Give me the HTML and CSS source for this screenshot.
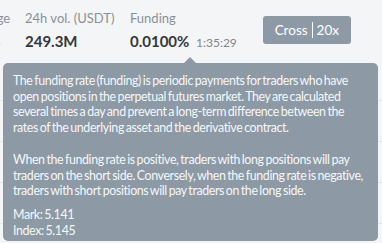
FILE: index.html
```html
<!DOCTYPE html>
<html>
<head>
<meta charset="utf-8">
<link rel="stylesheet" href="styles.css">
</head>
<body>
<div class="page">
  <div class="header">
    <div class="stat stat-change">
      <div class="label">Change</div>
      <div class="value red">-1.27%</div>
    </div>
    <div class="stat stat-vol">
      <div class="label">24h vol. (USDT)</div>
      <div class="value">249.3M</div>
    </div>
    <div class="stat stat-funding">
      <div class="label">Funding</div>
      <div class="value">0.0100% <span class="timer">1:35:29</span></div>
    </div>
    <div class="btn-wrap">
      <button class="btn">Cross<span class="sep"></span>20x</button>
    </div>
  </div>
  <div class="rows">
    <div class="row"></div>
    <div class="row"></div>
    <div class="row"></div>
    <div class="row"></div>
  </div>
  <div class="tooltip">
    <div class="arrow"></div>
    <p class="p1">The funding rate (funding) is periodic payments for traders who have open positions in the perpetual futures market. They are calculated several times a day and prevent a long-term difference between the rates of the underlying asset and the derivative contract.</p>
    <p class="p2">When the funding rate is positive, traders with long positions will pay traders on the short side. Conversely, when the funding rate is negative, traders with short positions will pay traders on the long side.</p>
    <p class="p3">Mark: 5.141<br>Index: 5.145</p>
  </div>
</div>
</body>
</html>
```

FILE: styles.css
```css
html, body {
  margin: 0;
  padding: 0;
  background: #f4f5f7;
  font-family: "Lato", "Open Sans", sans-serif;
  overflow: hidden;
}
.page {
  position: relative;
  width: 382px;
  height: 243px;
  overflow: hidden;
}
.header {
  display: flex;
  align-items: flex-start;
  padding-top: 10px;
  height: 50px;
}
.stat {
  display: flex;
  flex-direction: column;
  gap: 6px;
}
.stat-change {
  margin-left: -33px;
  width: 58px;
  flex: none;
}
.stat-change .value {
  margin-left: -14px;
}
.stat-vol {
  width: 105px;
  flex: none;
}
.label {
  font-size: 13px;
  color: #8b9097;
  line-height: 16px;
  white-space: nowrap;
}
.value {
  font-size: 15px;
  font-weight: 700;
  color: #33373d;
  line-height: 18px;
  white-space: nowrap;
}
.value.red {
  color: #e0464e;
}
.timer {
  font-size: 12px;
  font-weight: 400;
  color: #80858c;
  margin-left: 3px;
}
.btn-wrap {
  margin-left: auto;
  margin-right: 31px;
  padding-top: 6px;
}
.btn {
  display: flex;
  align-items: center;
  height: 28px;
  padding: 0 12px;
  border: none;
  border-radius: 3px;
  background: #8d9aa6;
  color: #fff;
  font-family: inherit;
  font-size: 13.5px;
}
.sep {
  display: inline-block;
  width: 1px;
  height: 16px;
  background: #fff;
  margin: 0 4px;
}
.rows {
  display: flex;
  flex-direction: column;
}
.row {
  height: 40px;
  border-bottom: 1px solid #e4e6e9;
}
.tooltip {
  position: absolute;
  left: 3px;
  top: 63px;
  width: 355px;
  height: 158px;
  padding: 10px 10px 10px 10px;
  background: #8d9aa6;
  border-radius: 5px;
  color: #f5f7f9;
  font-size: 12.4px;
  line-height: 15.7px;
  letter-spacing: -0.38px;
  word-spacing: -1px;
}
.tooltip p {
  margin: 0;
}
.tooltip .p1 {
  margin-bottom: 16px;
}
.tooltip .p2 {
  margin-bottom: 8px;
}
.arrow {
  position: absolute;
  top: -6px;
  left: 181px;
  width: 0;
  height: 0;
  border-left: 6px solid transparent;
  border-right: 6px solid transparent;
  border-bottom: 6px solid #8d9aa6;
}
```
